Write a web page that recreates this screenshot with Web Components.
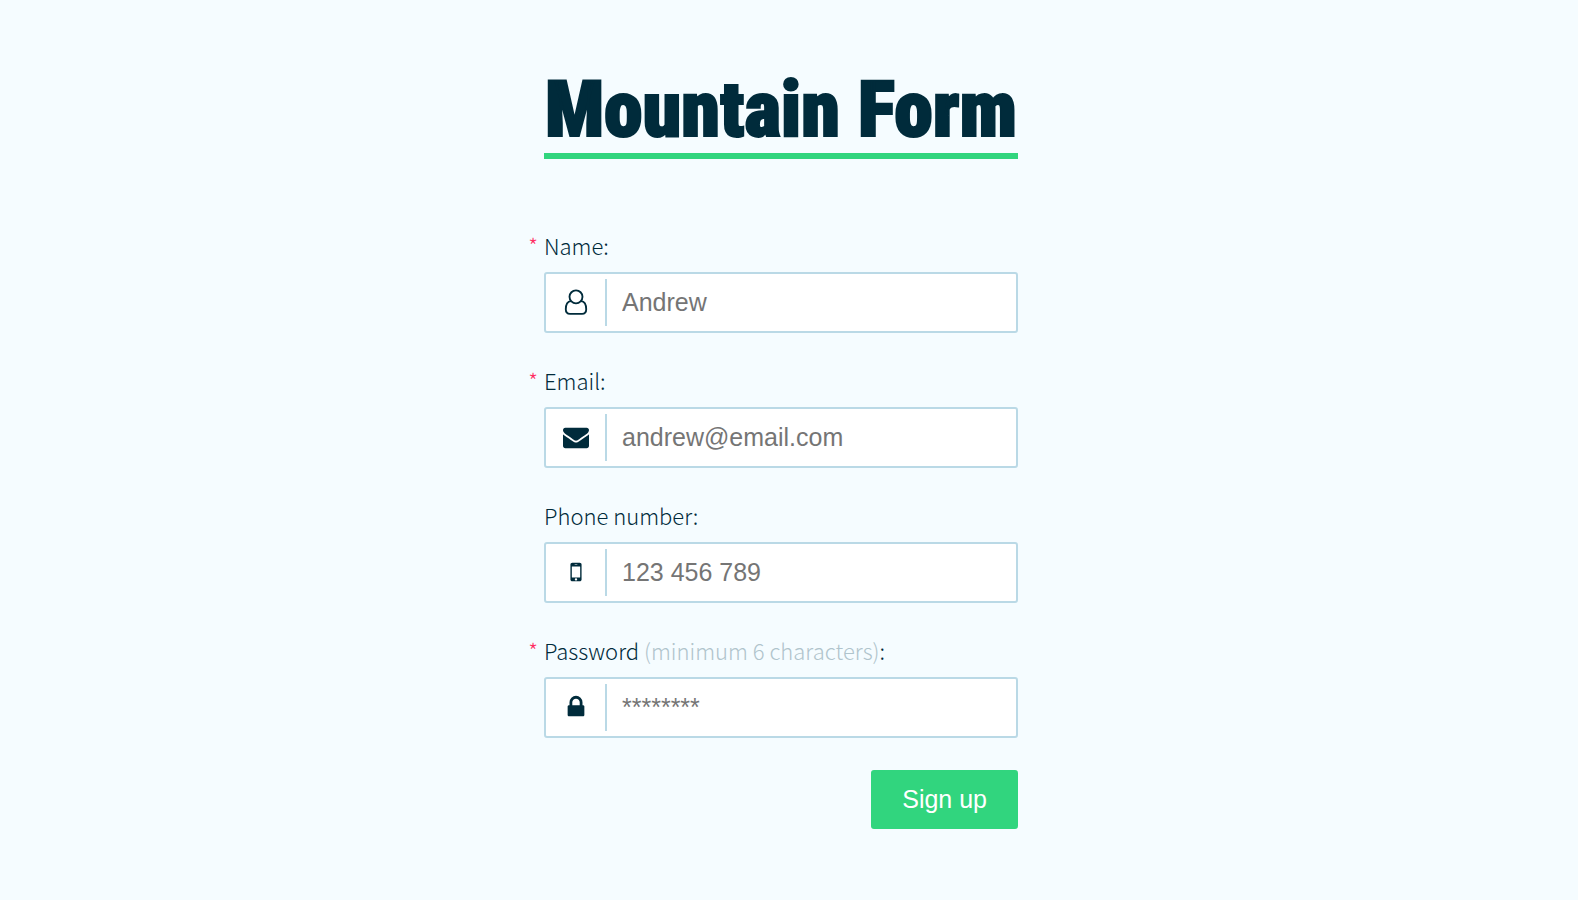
<!DOCTYPE html>
<html lang="en">
<head>
<meta charset="utf-8">
<meta name="viewport" content="width=device-width, initial-scale=1">
<title>Mountain Form</title>
<style>
  :root {
    --bg: #f5fcff;
    --ink: #002b3b;
    --line: #bad9e6;
    --accent: #31d57e;
    --muted: #b0c4cc;
    --required: #ff2e63;
  }
  body {
    margin: 0;
    background: var(--bg);
    color: var(--ink);
    font-family: "Liberation Sans", Arial, sans-serif;
  }
</style>
</head>
<body>
<mountain-form></mountain-form>
<script>
const icons = {
  user: '<g fill="none" stroke="currentColor" stroke-width="128"><circle cx="896" cy="540" r="448"/><path d="M550 836C310 860 192 1080 192 1400C192 1590 310 1715 480 1715H1312C1482 1715 1600 1590 1600 1400C1600 1080 1482 860 1242 836"/></g>',
  envelope: '<path d="M1792 710v794q0 66-47 113t-113 47h-1472q-66 0-113-47t-47-113v-794q44 49 101 87 362 246 497 345 57 42 92.5 65.5t94.5 48 110 24.5h2q51 0 110-24.5t94.5-48 92.5-65.5q170-123 498-345 57-39 100-87zm0-294q0 79-49 151t-122 123q-376 261-468 325-10 7-42.5 31t-54 38.5-52 32.5-57.5 27-50 9h-2q-23 0-50-9t-57.5-27-52-32.5-54-38.5-42.5-31q-91-64-262-182.5t-205-142.5q-62-42-117-115.5t-55-136.5q0-78 41.5-130t118.5-52h1472q65 0 112.5 47t47.5 113z"/>',
  mobile: '<path d="M976 1408q0-33-23.5-56.5t-56.5-23.5-56.5 23.5-23.5 56.5 23.5 56.5 56.5 23.5 56.5-23.5 23.5-56.5zm208-160v-704q0-13-9.5-22.5t-22.5-9.5h-512q-13 0-22.5 9.5t-9.5 22.5v704q0 13 9.5 22.5t22.5 9.5h512q13 0 22.5-9.5t9.5-22.5zm-192-848q0-16-16-16h-160q-16 0-16 16t16 16h160q16 0 16-16zm288-16v1024q0 52-38 90t-90 38h-512q-52 0-90-38t-38-90v-1024q0-52 38-90t90-38h512q52 0 90 38t38 90z"/>',
  lock: '<path d="M640 768h512v-192q0-106-75-181t-181-75-181 75-75 181v192zm832 96v576q0 40-28 68t-68 28h-960q-40 0-68-28t-28-68v-576q0-40 28-68t68-28h32v-192q0-184 132-316t316-132 316 132 132 316v192h32q40 0 68 28t28 68z"/>'
};

class FormIcon extends HTMLElement {
  constructor() {
    super();
    this.attachShadow({ mode: 'open' });
  }
  connectedCallback() {
    this.shadowRoot.innerHTML = `
      <style>
        :host { display: block; width: 26px; height: 26px; }
        svg { display: block; width: 100%; height: 100%; fill: currentColor; }
      </style>
      <svg viewBox="0 0 1792 1792" aria-hidden="true">${icons[this.getAttribute('name')]}</svg>`;
  }
}
customElements.define('form-icon', FormIcon);

class FormField extends HTMLElement {
  constructor() {
    super();
    this.attachShadow({ mode: 'open' });
  }
  connectedCallback() {
    const type = this.getAttribute('type');
    const required = this.hasAttribute('required');
    this.shadowRoot.innerHTML = `
      <style>
        :host { display: block; }
        label {
          display: block;
          position: relative;
          margin-bottom: 12px;
          font: 300 22px/30px "Noto Sans CJK JP", "Open Sans", sans-serif;
        }
        .star {
          position: absolute;
          right: 100%;
          top: 0;
          margin-right: 6px;
          color: var(--required);
        }
        .box {
          display: flex;
          border: 2px solid var(--line);
          border-radius: 3px;
          background: #fff;
        }
        .icon {
          display: flex;
          justify-content: end;
          flex: none;
          width: 43px;
          margin: 5px 0;
          padding: 10px 16px 0 0;
          border-right: 2px solid var(--line);
        }
        input {
          flex: 1;
          min-width: 0;
          height: 57px;
          box-sizing: border-box;
          padding: 0 15px;
          border: 0;
          outline: 0;
          background: none;
          color: inherit;
          font: 25px "Liberation Sans", Arial, sans-serif;
        }
        input::placeholder { color: #757575; }
        .box:focus-within { border-color: var(--accent); }
      </style>
      <label for="control">${required ? '<span class="star">*</span>' : ''}<slot></slot></label>
      <div class="box">
        <div class="icon"><form-icon name="${this.getAttribute('icon')}"></form-icon></div>
        <input id="control" type="${type}" placeholder="${this.getAttribute('placeholder')}"${required ? ' required' : ''}>
      </div>`;
  }
}
customElements.define('form-field', FormField);

class MountainForm extends HTMLElement {
  constructor() {
    super();
    this.attachShadow({ mode: 'open' }).innerHTML = `
      <style>
        :host { display: block; padding: 67px 32px 71px 16px; }
        main { max-width: 474px; margin: 0 auto; }
        h1 {
          margin: 0 0 71px;
          border-bottom: 6px solid var(--accent);
          font: 900 78px/86px "Roboto Condensed", "Liberation Sans Narrow", sans-serif;
          text-align: center;
          white-space: nowrap;
          -webkit-text-stroke: 2px currentColor;
        }
        form { display: grid; gap: 32px; }
        .hint { color: var(--muted); }
        button {
          justify-self: end;
          padding: 0 31px;
          border: 0;
          border-radius: 3px;
          background: var(--accent);
          color: #fff;
          font: 25px/59px "Liberation Sans", Arial, sans-serif;
          cursor: pointer;
        }
      </style>
      <main>
        <h1>Mountain Form</h1>
        <form>
          <form-field type="text" icon="user" placeholder="Andrew" required>Name:</form-field>
          <form-field type="email" icon="envelope" placeholder="andrew@email.com" required>Email:</form-field>
          <form-field type="tel" icon="mobile" placeholder="123 456 789">Phone number:</form-field>
          <form-field type="password" icon="lock" placeholder="********" required>Password <span class="hint">(minimum 6 characters)</span>:</form-field>
          <button type="submit">Sign up</button>
        </form>
      </main>`;
  }
}
customElements.define('mountain-form', MountainForm);
</script>
</body>
</html>
